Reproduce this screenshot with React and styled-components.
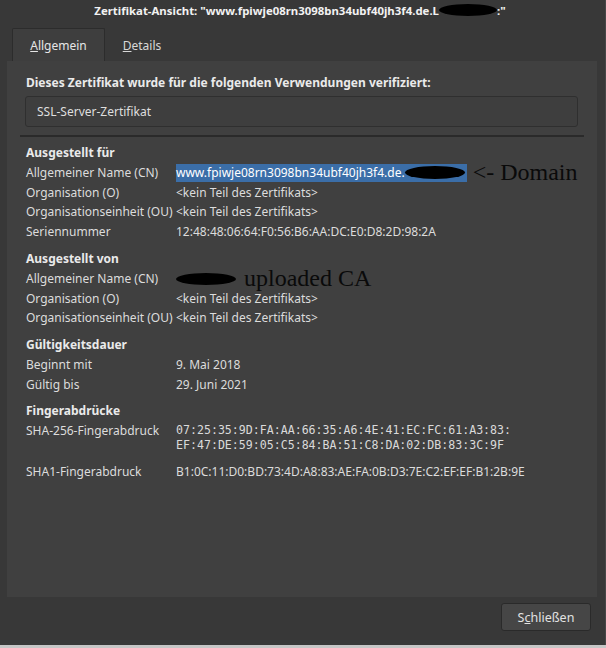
import React from "react";
import styled, { createGlobalStyle } from "styled-components";

const GlobalStyle = createGlobalStyle`
  html, body {
    margin: 0;
    padding: 0;
    background: #383838;
  }
  body {
    font-family: "Noto Sans", "DejaVu Sans", sans-serif;
    font-size: 12px;
    color: #dcdcdc;
  }
`;

const Window = styled.div`
  width: 606px;
  height: 648px;
  display: flex;
  flex-direction: column;
  background: #383838;
  box-shadow: inset -1px 0 0 #474747;
  overflow: hidden;
`;

const TitleBar = styled.div`
  height: 20px;
  display: flex;
  align-items: center;
  justify-content: center;
  font-weight: bold;
  font-size: 11.4px;
  color: #f2f2f2;
  white-space: nowrap;
  padding-right: 6px;
`;

const TabBar = styled.div`
  display: flex;
  padding: 8px 0 0 12px;
  height: 41px;
  box-sizing: border-box;
`;

const Tab = styled.div`
  width: ${(p) => p.$width}px;
  box-sizing: border-box;
  display: flex;
  align-items: center;
  justify-content: center;
  font-size: 12px;
  color: ${(p) => (p.$active ? "#e6e6e6" : "#d8d8d8")};
  background: ${(p) => (p.$active ? "#3e3e3e" : "transparent")};
  border: 1px solid ${(p) => (p.$active ? "#2c2c2c" : "transparent")};
  border-bottom: none;
  border-radius: 2px 2px 0 0;
`;

const Panel = styled.div`
  flex: 1;
  margin: 0 9px 0 7px;
  background: #404040;
  padding: 12px 0 0 19px;
  display: flex;
  flex-direction: column;
`;

const Heading = styled.div`
  font-weight: bold;
  color: #eaeaea;
  line-height: 20px;
  margin-top: ${(p) => p.$top || 0}px;
`;

const UsageBox = styled.div`
  margin: 3px 0 0 -1px;
  width: 553px;
  height: 31px;
  box-sizing: border-box;
  border: 1px solid #2f2f2f;
  border-radius: 3px;
  background: #3e3e3e;
  display: flex;
  align-items: center;
  padding-left: 11px;
  color: #dedede;
`;

const Separator = styled.div`
  margin: 8px 0 6px -6px;
  width: 564px;
  height: 2px;
  background: #2a2a2a;
`;

const Row = styled.div`
  display: flex;
  line-height: 19.7px;
  padding-bottom: ${(p) => p.$gap || 0}px;
`;

const Label = styled.div`
  width: 150px;
  flex-shrink: 0;
  white-space: nowrap;
`;

const Value = styled.div`
  white-space: nowrap;
  display: flex;
  align-items: center;
`;

const Mono = styled.div`
  font-family: "DejaVu Sans Mono", "Liberation Mono", monospace;
  font-size: 11.6px;
  line-height: 15px;
  padding-top: 2px;
  color: #dadada;
`;

const Selected = styled.span`
  background: #3b6ea8;
  color: #ffffff;
  display: inline-flex;
  align-items: center;
  height: 18px;
`;

const Redacted = styled.span`
  display: inline-block;
  width: ${(p) => p.$w}px;
  height: ${(p) => p.$h}px;
  background: #000;
  border-radius: 50%;
  margin-left: ${(p) => p.$ml || 0}px;
`;

const Note = styled.span`
  font-family: "Liberation Serif", "Times New Roman", serif;
  font-size: 24px;
  color: #0a0a0a;
  margin-left: ${(p) => p.$ml}px;
  line-height: 19px;
`;

const Footer = styled.div`
  height: 48px;
  display: flex;
  justify-content: flex-end;
  align-items: flex-start;
  padding: 6px 15px 0 0;
  box-sizing: border-box;
`;

const Button = styled.button`
  width: 90px;
  height: 28px;
  background: #464646;
  border: 1px solid #2a2a2a;
  border-radius: 3px;
  color: #e2e2e2;
  font-family: inherit;
  font-size: 12.5px;
  padding: 0;
`;

const BottomStrip = styled.div`
  height: 3px;
  background: #c6c6c6;
`;

function InfoRow({ label, children, gap }) {
  return (
    <Row $gap={gap}>
      <Label>{label}</Label>
      <Value>{children}</Value>
    </Row>
  );
}

export default function App() {
  return (
    <Window>
      <GlobalStyle />
      <TitleBar>
        Zertifikat-Ansicht: "www.fpiwje08rn3098bn34ubf40jh3f4.de.L
        <Redacted $w={58} $h={12} />
        :"
      </TitleBar>
      <TabBar>
        <Tab $active $width={93}>
          <span>
            <u>A</u>llgemein
          </span>
        </Tab>
        <Tab $width={74}>
          <span>
            <u>D</u>etails
          </span>
        </Tab>
      </TabBar>
      <Panel>
        <Heading>Dieses Zertifikat wurde für die folgenden Verwendungen verifiziert:</Heading>
        <UsageBox>SSL-Server-Zertifikat</UsageBox>
        <Separator />

        <Heading>Ausgestellt für</Heading>
        <InfoRow label="Allgemeiner Name (CN)">
          <Selected>
            www.fpiwje08rn3098bn34ubf40jh3f4.de.
            <Redacted $w={60} $h={13} />
            <Redacted $w={2} $h={0} />
          </Selected>
          <Note $ml={6}>&lt;- Domain</Note>
        </InfoRow>
        <InfoRow label="Organisation (O)">&lt;kein Teil des Zertifikats&gt;</InfoRow>
        <InfoRow label="Organisationseinheit (OU)">&lt;kein Teil des Zertifikats&gt;</InfoRow>
        <InfoRow label="Seriennummer">12:48:48:06:64:F0:56:B6:AA:DC:E0:D8:2D:98:2A</InfoRow>

        <Heading $top={7}>Ausgestellt von</Heading>
        <InfoRow label="Allgemeiner Name (CN)">
          <Redacted $w={60} $h={12} />
          <Note $ml={8}>uploaded CA</Note>
        </InfoRow>
        <InfoRow label="Organisation (O)">&lt;kein Teil des Zertifikats&gt;</InfoRow>
        <InfoRow label="Organisationseinheit (OU)">&lt;kein Teil des Zertifikats&gt;</InfoRow>

        <Heading $top={7}>Gültigkeitsdauer</Heading>
        <InfoRow label="Beginnt mit">9. Mai 2018</InfoRow>
        <InfoRow label="Gültig bis">29. Juni 2021</InfoRow>

        <Heading $top={7}>Fingerabdrücke</Heading>
        <InfoRow label="SHA-256-Fingerabdruck" gap={9}>
          <Mono>
            07:25:35:9D:FA:AA:66:35:A6:4E:41:EC:FC:61:A3:83:
            <br />
            EF:47:DE:59:05:C5:84:BA:51:C8:DA:02:DB:83:3C:9F
          </Mono>
        </InfoRow>
        <InfoRow label="SHA1-Fingerabdruck">B1:0C:11:D0:BD:73:4D:A8:83:AE:FA:0B:D3:7E:C2:EF:EF:B1:2B:9E</InfoRow>
      </Panel>
      <Footer>
        <Button>
          S<u>c</u>hließen
        </Button>
      </Footer>
      <BottomStrip />
    </Window>
  );
}
